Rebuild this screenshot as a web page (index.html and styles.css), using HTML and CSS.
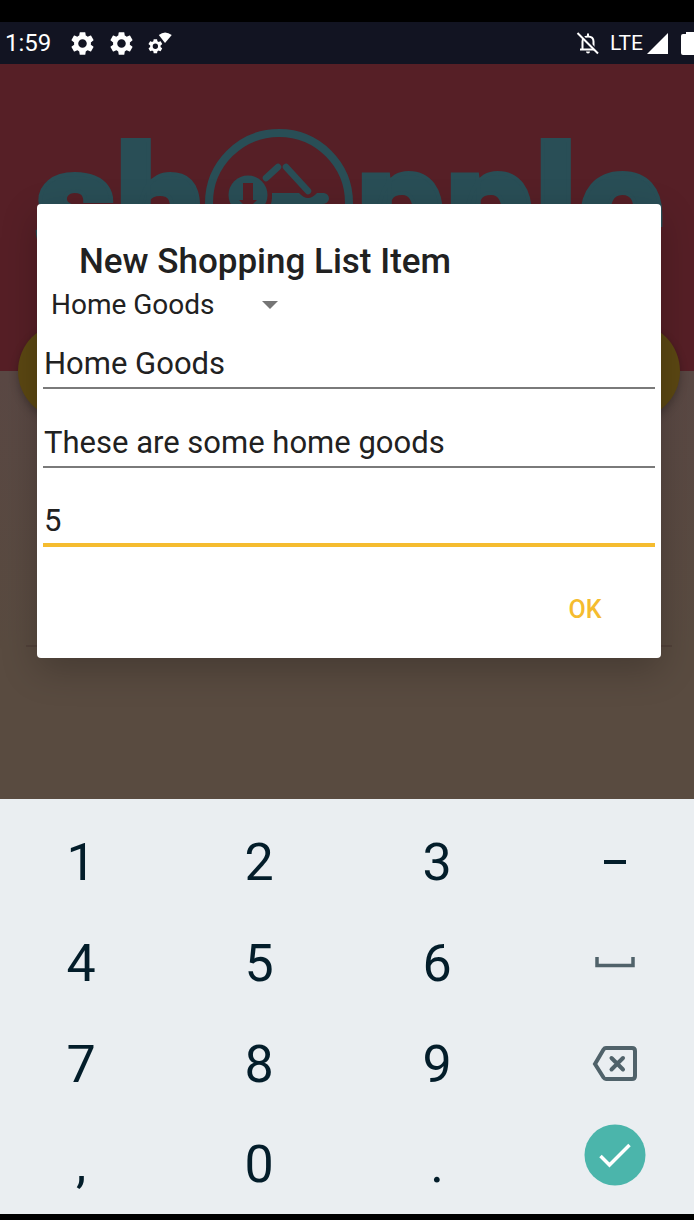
FILE: index.html
```html
<!DOCTYPE html>
<html lang="en">
<head>
<meta charset="utf-8">
<meta name="viewport" content="width=device-width, initial-scale=1">
<title>Shopple</title>
<link rel="stylesheet" href="styles.css">
</head>
<body class="device">
<header class="status">
  <div class="status-left">
    <span class="clock">1:59</span>
    <svg class="gear" viewBox="0 0 24 24"><use href="#gear"/></svg>
    <svg class="gear" viewBox="0 0 24 24"><use href="#gear"/></svg>
    <svg class="gear" viewBox="0 0 24 24"><use href="#gear" transform="translate(0 7) scale(.62)"/><path d="M10.500 4.500Q16 0 22 4.500L16 11.500Z"/></svg>
  </div>
  <div class="status-right">
    <svg class="bell" viewBox="0 0 24 24"><path d="M6.500 18V10.500Q6.500 5.500 12 5.500T17.500 10.500V18M4 18.500H20M12 2.500V5.500" fill="none" stroke="currentColor" stroke-width="2"/><path d="M10 20.500h4a2 2 0 0 1-4 0Z"/><path d="M3 1.500L23 21.500" stroke="#121422" stroke-width="2"/><path d="M1.500 2L22 22.500" stroke="currentColor" stroke-width="2"/></svg>
    <span class="network">LTE</span>
    <svg class="signal" viewBox="0 0 21 21"><path d="M21 0V21H0Z"/></svg>
    <svg class="battery" viewBox="0 0 20 23"><path d="M5 2V0h8v2h5q2 0 2 2v17q0 2-2 2H2q-2 0-2-2V4q0-2 2-2Z"/></svg>
  </div>
</header>
<main class="screen">
  <section class="banner">
    <div class="logo" role="img" aria-label="shopple">
      <span>sh</span>
      <svg class="basket" viewBox="0 0 148 148"><circle cx="74" cy="74" r="70" fill="none" stroke="currentColor" stroke-width="8"/><circle cx="43" cy="66" r="19.500"/><path d="M38 54h10v17h4l-9 9-9-9h4Z" fill="#561f26"/><path d="M61 49L73 38M81 38L103 62" stroke="currentColor" stroke-width="6.500" stroke-linecap="round" fill="none"/><path d="M67 64H94Q103 74 112 64H119Q124 65 124 70Q123 75 117 75L108 110H55L52 88Q68 84 67 64Z"/></svg>
      <span>pple</span>
    </div>
  </section>
  <section class="content">
    <button class="pill" type="button" aria-label="Add item"></button>
    <hr class="divider">
  </section>
  <div class="overlay">
    <form class="dialog" role="dialog" aria-labelledby="dialog-title">
      <h1 class="title" id="dialog-title">New Shopping List Item</h1>
      <div class="picker">
        <select class="select" aria-label="Category"><option>Home Goods</option></select>
        <svg class="arrow" viewBox="0 0 16 8"><path d="M0 0H16L8 8Z"/></svg>
      </div>
      <input class="field" type="text" aria-label="Name" value="Home Goods">
      <input class="field" type="text" aria-label="Description" value="These are some home goods">
      <input class="field field-active" type="text" inputmode="numeric" aria-label="Quantity" value="5">
      <div class="actions"><button class="ok" type="button">OK</button></div>
    </form>
  </div>
</main>
<section class="keyboard" aria-label="Number keyboard">
  <button class="key">1</button><button class="key">2</button><button class="key">3</button>
  <button class="key" aria-label="Minus"><svg class="icon" viewBox="0 0 46 46"><path d="M12 22H34" stroke="#031d2a" stroke-width="4"/></svg></button>
  <button class="key">4</button><button class="key">5</button><button class="key">6</button>
  <button class="key" aria-label="Space"><svg class="icon" viewBox="0 0 46 46"><path d="M5 16V24.500H41V16" fill="none" stroke="#50626a" stroke-width="3.500"/></svg></button>
  <button class="key">7</button><button class="key">8</button><button class="key">9</button>
  <button class="key" aria-label="Backspace"><svg class="icon" viewBox="0 0 46 46"><path d="M14 6H40Q43 6 43 9V34Q43 37 40 37H14Q12.500 37 11.500 35.500L3 22L11.500 7.500Q12.500 6 14 6ZM19.500 16L31 27.500M31 16L19.500 27.500" fill="none" stroke="#50626a" stroke-width="4" stroke-linecap="round"/></svg></button>
  <button class="key">,</button><button class="key">0</button><button class="key">.</button>
  <button class="key key-done" aria-label="Done"><svg class="done" viewBox="0 0 62 62"><circle cx="31" cy="31" r="30.500" fill="#4bb5ab"/><path d="M16.500 32L25.500 41L45.500 21" fill="none" stroke="#fff" stroke-width="3.500"/></svg></button>
</section>
<svg class="defs" aria-hidden="true"><defs><path id="gear" fill-rule="evenodd" d="M19.400 13c0-.3.100-.6.100-1s0-.7-.1-1l2.200-1.700c.2-.2.300-.4.100-.7l-2-3.500c-.1-.2-.4-.3-.6-.2l-2.500 1c-.5-.4-1.100-.7-1.700-1l-.4-2.600c0-.3-.2-.4-.5-.4h-4c-.3 0-.5.200-.5.400l-.4 2.600c-.6.300-1.200.6-1.700 1l-2.500-1c-.2-.1-.5 0-.6.200l-2 3.500c-.1.200-.1.500.1.700L4.600 11c0 .3-.1.700-.1 1s0 .7.100 1l-2.200 1.700c-.2.200-.2.400-.1.700l2 3.500c.1.200.4.300.6.200l2.500-1c.5.400 1.100.7 1.700 1l.4 2.600c0 .3.200.4.500.4h4c.3 0 .5-.2.500-.4l.4-2.600c.6-.3 1.200-.6 1.700-1l2.500 1c.2.100.5 0 .6-.2l2-3.500c.1-.2.100-.5-.1-.7ZM12 15.800a3.800 3.800 0 1 1 0-7.600 3.800 3.800 0 0 1 0 7.600Z"/></defs></svg>
</body>
</html>
```
FILE: styles.css
```css
* { box-sizing: border-box; }

.device {
  margin: 0;
  min-height: 100vh;
  display: flex;
  flex-direction: column;
  overflow-x: hidden;
  border-top: 22px solid #000;
  border-bottom: 6px solid #000;
  background: #000;
  font-family: Roboto, "Liberation Sans", sans-serif;
}

button, input, select { font-family: inherit; border: 0; margin: 0; padding: 0; background: none; }
svg { display: block; flex: none; fill: currentColor; }
.defs { width: 0; height: 0; position: absolute; }

.status {
  display: flex;
  justify-content: space-between;
  height: 42px;
  padding-left: 5px;
  overflow: hidden;
  background: #121422;
  color: #fff;
}
.status-left, .status-right { display: flex; align-items: center; }
.status-left { gap: 12px; }
.clock { font-size: 24px; margin-right: 6px; line-height: 44px; }
.gear { width: 27px; height: 27px; }
.bell { width: 24px; height: 24px; }
.network { font-size: 21px; margin: 0 4px 0 10px; }
.signal { width: 21px; height: 21px; }
.battery { width: 20px; height: 23px; margin: 0 -7px 0 13px; }

.screen {
  position: relative;
  flex: 1;
  display: flex;
  flex-direction: column;
  overflow: hidden;
}
.banner { height: 307px; padding: 46px 16px 0 35px; overflow: hidden; background: #561f26; }
.logo {
  display: flex;
  align-items: flex-start;
  color: #294e56;
  font-size: 158px;
  font-weight: 900;
  line-height: 188px;
  -webkit-text-stroke: 4px #294e56;
}
.basket { width: 148px; height: 148px; margin: 19px 3px 0 0; }
.content { flex: 1; padding: 0 14px 0 18px; background: linear-gradient(#5a4844, #594b40 65%); }
.pill {
  display: block;
  width: 100%;
  height: 96px;
  margin-top: -48px;
  border-radius: 48px;
  background: #5b4712;
  box-shadow: 0 4px 8px rgba(0, 0, 0, .25);
}
.divider { height: 2px; margin: 226px 8px 0; border: 0; background: #514139; }

.overlay {
  position: absolute;
  inset: 0;
  display: flex;
  align-items: center;
  padding: 0 33px 2px 37px;
}
.dialog {
  flex: 1;
  padding: 36px 6px 16px;
  border-radius: 4px;
  background: #fff;
  color: #212121;
  box-shadow: 0 12px 36px rgba(0, 0, 0, .22);
}
.title { margin: 0; padding-left: 36px; font-size: 35px; font-weight: 500; line-height: 44px; }
.picker { display: flex; align-items: center; height: 42px; padding-left: 8px; }
.select { width: 211px; height: 42px; appearance: none; color: inherit; font-size: 28px; outline: 0; }
.arrow { width: 16px; height: 8px; color: #757575; }
.field {
  display: block;
  width: 100%;
  height: 63px;
  margin-bottom: 16px;
  padding: 14px 0 0 1px;
  border-bottom: 2px solid #7a7a7a;
  border-radius: 0;
  color: inherit;
  font-size: 31px;
  outline: 0;
}
.field-active { border-bottom: 4px solid #f5bc2f; }
.actions { display: flex; justify-content: flex-end; padding: 15px 24px 0 0; }
.ok { width: 92px; height: 64px; color: #f5bc2f; font-size: 25px; font-weight: 500; }

.keyboard {
  display: grid;
  grid-template-columns: repeat(4, 1fr);
  grid-template-rows: 101px 101px 101px 99px;
  margin: 0 -10px 0 -8px;
  padding: 13px 0 0;
  background: #eaeef1;
}
.key { display: grid; place-items: center; color: #031d2a; font-size: 52px; line-height: 60px; }
.icon { width: 46px; height: 46px; }
.key-done { align-items: start; padding-top: 9px; }
.done { width: 62px; height: 62px; }
```
